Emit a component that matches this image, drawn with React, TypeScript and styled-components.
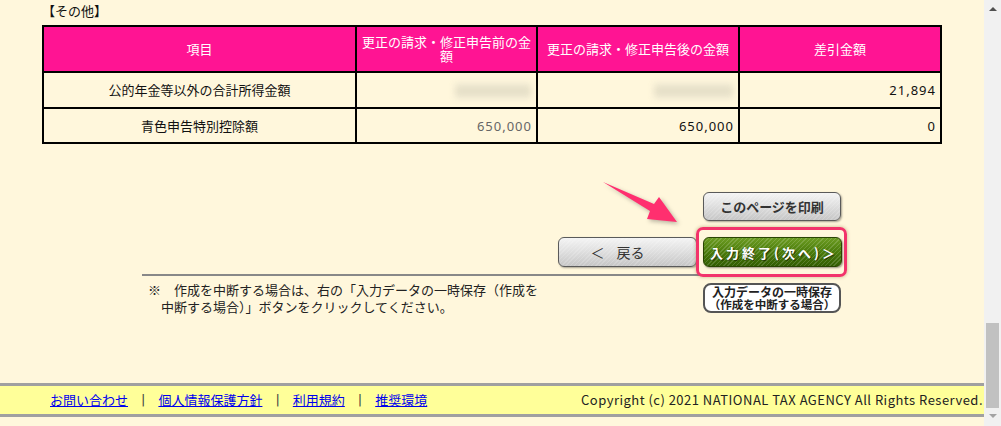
import React from "react";
import styled, { createGlobalStyle } from "styled-components";

const GlobalStyle = createGlobalStyle`
  html, body { margin: 0; padding: 0; background: #fff7dc; overflow: hidden; }
  body { font-family: "Noto Sans CJK JP", "DejaVu Sans", sans-serif; color: #000; }
`;

const Page = styled.div`
  display: flex;
  width: 1001px;
  height: 426px;
`;

const Main = styled.div`
  position: relative;
  flex: 0 0 984px;
  display: flex;
  flex-direction: column;
`;

const Content = styled.div`
  padding-left: 42px;
`;

const Title = styled.div`
  font-size: 13px;
  line-height: 19px;
  height: 19px;
  margin: 1px 0 5px;
  color: #111;
`;

const Table = styled.table`
  border-collapse: collapse;
  table-layout: fixed;
  width: 900px;
  border: 2px solid #000;
`;

const HeadCell = styled.th`
  background: #ff1493;
  color: #fff;
  font-weight: normal;
  font-size: 13px;
  line-height: 14px;
  height: 44px;
  padding: 0 4px;
  border: 2px solid #000;
  text-align: center;
`;

const LabelCell = styled.td<{ $h: number }>`
  height: ${(p) => p.$h}px;
  padding: 0 5px;
  border: 2px solid #000;
  font-size: 13px;
  line-height: 16px;
  text-align: center;
  color: #111;
`;

const NumCell = styled.td<{ $muted?: boolean }>`
  padding: 0 4px 0 5px;
  border: 2px solid #000;
  font-family: "Noto Sans", sans-serif;
  font-size: 13px;
  letter-spacing: 1px;
  line-height: 16px;
  text-align: right;
  color: ${(p) => (p.$muted ? "#666" : "#111")};
`;

const Blurred = styled.span<{ $w: number }>`
  display: inline-block;
  width: ${(p) => p.$w}px;
  height: 16px;
  margin-right: 1px;
  vertical-align: middle;
  background: linear-gradient(#f1ebd6, #e3dcc3 50%, #f1ebd6);
  filter: blur(3px);
`;

const Actions = styled.div`
  width: 704px;
  margin: 48px 0 0 100px;
  display: flex;
  flex-direction: column;
`;

const ButtonRow = styled.div<{ $top: number; $pr: number }>`
  display: flex;
  justify-content: flex-end;
  align-items: center;
  gap: 6px;
  margin-top: ${(p) => p.$top}px;
  padding-right: ${(p) => p.$pr}px;
`;

const stripes =
  "repeating-linear-gradient(135deg, rgba(255,255,255,0.16) 0 1px, rgba(0,0,0,0) 1px 3px)";

const GreyButton = styled.button<{ $w: number; $h: number; $fs: number }>`
  box-sizing: border-box;
  width: ${(p) => p.$w}px;
  height: ${(p) => p.$h}px;
  border: 1px solid #5a5a5a;
  border-radius: 6px;
  background: ${stripes}, linear-gradient(#f4f4f4, #dedede 50%, #c6c6c6);
  box-shadow: 1px 1px 2px rgba(0, 0, 0, 0.35);
  color: #333;
  font-family: "Noto Sans CJK JP", sans-serif;
  font-size: ${(p) => p.$fs}px;
  font-weight: bold;
  display: flex;
  align-items: center;
  justify-content: center;
  padding: 0;
`;

const BackButton = styled(GreyButton)`
  font-weight: normal;
  gap: 12px;
  padding-right: 20px;
  color: #333;
`;

const GreenWrap = styled.div`
  position: relative;
`;

const GreenButton = styled.button`
  box-sizing: border-box;
  width: 139px;
  height: 30px;
  border: 1px solid #2a4503;
  border-radius: 6px;
  background: ${stripes}, linear-gradient(#6c9c22, #4b7c0b 50%, #325d02);
  box-shadow: 1px 1px 2px rgba(0, 0, 0, 0.4);
  color: #fff;
  font-family: "Noto Sans CJK JP", sans-serif;
  font-size: 13px;
  font-weight: bold;
  letter-spacing: 3px;
  text-shadow: 1px 1px 1px rgba(0, 0, 0, 0.55);
  padding: 0 0 0 3px;
  display: flex;
  align-items: center;
  justify-content: center;
`;

const Highlight = styled.div`
  position: absolute;
  inset: -10px -5px -10px -7px;
  border: 3px solid #f2336b;
  border-radius: 7px;
  box-shadow: 0 0 3px 1px rgba(120, 90, 20, 0.25);
  pointer-events: none;
`;

const Divider = styled.div`
  margin-top: 7px;
  width: 700px;
  height: 2px;
  background: #888;
`;

const NoteRow = styled.div`
  display: flex;
  justify-content: space-between;
  align-items: flex-start;
  margin-top: 5px;
  padding: 0 5px 0 6px;
`;

const Note = styled.p`
  margin: 0;
  width: 382px;
  padding-left: 13px;
  text-indent: -13px;
  font-size: 13px;
  line-height: 17px;
  color: #222;
`;

const SaveButton = styled.button`
  box-sizing: border-box;
  width: 138px;
  height: 30px;
  margin-top: 2px;
  border: 2px solid #555;
  border-radius: 8px;
  background: #fff;
  color: #222;
  font-family: "Noto Sans CJK JP", sans-serif;
  font-weight: bold;
  padding: 0;
  display: flex;
  flex-direction: column;
  align-items: center;
  justify-content: center;
`;

const SaveLine = styled.span<{ $fs: number }>`
  display: block;
  font-size: ${(p) => p.$fs}px;
  line-height: 13px;
  white-space: nowrap;
`;

const Arrow = styled.svg`
  position: absolute;
  left: 598px;
  top: 176px;
  overflow: visible;
  filter: drop-shadow(2px 2px 2px rgba(0, 0, 0, 0.28));
`;

const Footer = styled.footer`
  margin-top: auto;
  margin-bottom: 9px;
  height: 28px;
  background: #ffff99;
  border-top: 3px solid #a0a0a0;
  border-bottom: 3px solid #a0a0a0;
  display: flex;
  align-items: center;
  justify-content: space-between;
  padding: 0 1px 0 50px;
  font-size: 13px;
  line-height: 16px;
`;

const Links = styled.nav`
  display: flex;
  align-items: center;
`;

const FooterLink = styled.a`
  color: #0000ee;
  text-decoration: underline;
  cursor: pointer;
`;

const Sep = styled.span`
  margin: 0 13px;
  color: #444;
  font-family: "DejaVu Sans", sans-serif;
`;

const Copyright = styled.span`
  color: #222;
  white-space: nowrap;
  letter-spacing: 0.48px;
`;

const Scrollbar = styled.div`
  flex: 0 0 17px;
  background: #f1f1f1;
  display: flex;
  flex-direction: column;
  align-items: center;
  padding: 7px 0 8px;
  box-sizing: border-box;
`;

const ArrowUp = styled.div`
  width: 0;
  height: 0;
  border-left: 4px solid transparent;
  border-right: 4px solid transparent;
  border-bottom: 4px solid #505050;
`;

const ArrowDown = styled.div`
  width: 0;
  height: 0;
  margin-top: 6px;
  border-left: 4px solid transparent;
  border-right: 4px solid transparent;
  border-top: 4px solid #a3a3a3;
`;

const Track = styled.div`
  flex: 1;
  display: flex;
  flex-direction: column;
  justify-content: flex-end;
`;

const Thumb = styled.div`
  width: 13px;
  height: 85px;
  background: #c1c1c1;
`;

export default function App() {
  return (
    <>
      <GlobalStyle />
      <Page>
        <Main>
          <Content>
            <Title>【その他】</Title>
            <Table>
              <colgroup>
                <col style={{ width: 313 }} />
                <col style={{ width: 181 }} />
                <col style={{ width: 202 }} />
                <col style={{ width: 202 }} />
              </colgroup>
              <thead>
                <tr>
                  <HeadCell>項目</HeadCell>
                  <HeadCell>更正の請求・修正申告前の金額</HeadCell>
                  <HeadCell>更正の請求・修正申告後の金額</HeadCell>
                  <HeadCell>差引金額</HeadCell>
                </tr>
              </thead>
              <tbody>
                <tr>
                  <LabelCell $h={34}>公的年金等以外の合計所得金額</LabelCell>
                  <NumCell>
                    <Blurred $w={76} />
                  </NumCell>
                  <NumCell>
                    <Blurred $w={79} />
                  </NumCell>
                  <NumCell>21,894</NumCell>
                </tr>
                <tr>
                  <LabelCell $h={33}>青色申告特別控除額</LabelCell>
                  <NumCell $muted>650,000</NumCell>
                  <NumCell>650,000</NumCell>
                  <NumCell>0</NumCell>
                </tr>
              </tbody>
            </Table>

            <Actions>
              <ButtonRow $top={0} $pr={5}>
                <GreyButton $w={138} $h={29} $fs={13}>
                  このページを印刷
                </GreyButton>
              </ButtonRow>
              <ButtonRow $top={16} $pr={4}>
                <BackButton $w={139} $h={30} $fs={14}>
                  <span>＜</span>
                  <span>戻る</span>
                </BackButton>
                <GreenWrap>
                  <GreenButton>入力終了(次へ)＞</GreenButton>
                  <Highlight />
                </GreenWrap>
              </ButtonRow>
              <Divider />
              <NoteRow>
                <Note>
                  ※　作成を中断する場合は、右の「入力データの一時保存（作成を中断する場合）」ボタンをクリックしてください。
                </Note>
                <SaveButton>
                  <SaveLine $fs={12}>入力データの一時保存</SaveLine>
                  <SaveLine $fs={11.5}>（作成を中断する場合）</SaveLine>
                </SaveButton>
              </NoteRow>
            </Actions>
          </Content>

          <Arrow width="90" height="52" viewBox="0 0 90 52">
            <polygon
              points="5,6 56,28 61,21 79,46 49,43 52,35"
              fill="#ff2f6f"
            />
          </Arrow>

          <Footer>
            <Links>
              <FooterLink>お問い合わせ</FooterLink>
              <Sep>|</Sep>
              <FooterLink>個人情報保護方針</FooterLink>
              <Sep>|</Sep>
              <FooterLink>利用規約</FooterLink>
              <Sep>|</Sep>
              <FooterLink>推奨環境</FooterLink>
            </Links>
            <Copyright>
              Copyright (c) 2021 NATIONAL TAX AGENCY All Rights Reserved.
            </Copyright>
          </Footer>
        </Main>
        <Scrollbar>
          <ArrowUp />
          <Track>
            <Thumb />
          </Track>
          <ArrowDown />
        </Scrollbar>
      </Page>
    </>
  );
}
